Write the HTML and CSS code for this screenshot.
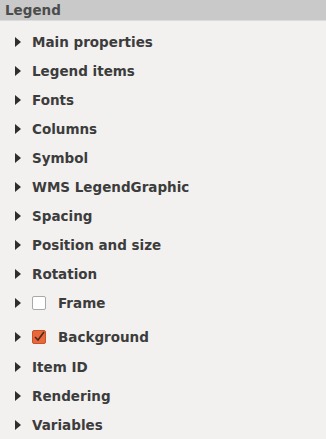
FILE: index.html
```html
<!DOCTYPE html>
<html lang="en">
<head>
    <meta charset="UTF-8">
    <title>Legend</title>
    <link rel="stylesheet" href="styles.css">
</head>
<body>
    <div class="panel">
        <div class="header">Legend</div>
        <div class="groups">
            <div class="group"><span class="arrow"></span><span class="title">Main properties</span></div>
            <div class="group"><span class="arrow"></span><span class="title">Legend items</span></div>
            <div class="group"><span class="arrow"></span><span class="title">Fonts</span></div>
            <div class="group"><span class="arrow"></span><span class="title">Columns</span></div>
            <div class="group"><span class="arrow"></span><span class="title">Symbol</span></div>
            <div class="group"><span class="arrow"></span><span class="title">WMS LegendGraphic</span></div>
            <div class="group"><span class="arrow"></span><span class="title">Spacing</span></div>
            <div class="group"><span class="arrow"></span><span class="title">Position and size</span></div>
            <div class="group"><span class="arrow"></span><span class="title">Rotation</span></div>
            <div class="group"><span class="arrow"></span><span class="box"></span><span class="title">Frame</span></div>
            <div class="group check-group"><span class="arrow"></span><span class="box checked">
                <svg width="14" height="14" viewBox="0 0 14 14"><path d="M3 7 L6 10 L12 2" fill="none" stroke="#4a2a1c" stroke-width="1.6"/></svg>
            </span><span class="title">Background</span></div>
            <div class="group"><span class="arrow"></span><span class="title">Item ID</span></div>
            <div class="group"><span class="arrow"></span><span class="title">Rendering</span></div>
            <div class="group"><span class="arrow"></span><span class="title">Variables</span></div>
        </div>
    </div>
</body>
</html>
```
FILE: styles.css
```css
body {
    margin: 0;
    background-color: #f2f1f0;
    font-family: "DejaVu Sans", sans-serif;
    color: #3c3c3c;
}
.panel {
    width: 326px;
    height: 439px;
    overflow: hidden;
}
.header {
    height: 20px;
    line-height: 20px;
    padding-left: 5px;
    background-color: #c9c9c9;
    border-bottom: 1px solid #dcdcdc;
    font-size: 13.5px;
    font-weight: bold;
    color: #4c4c4c;
}
.groups {
    padding-top: 6px;
}
.group {
    height: 29px;
    display: flex;
    align-items: center;
    padding-left: 15px;
    font-size: 13.5px;
    font-weight: bold;
}
.check-group {
    height: 30px;
    margin-top: 5px;
}
.arrow {
    width: 0;
    height: 0;
    border-top: 5px solid transparent;
    border-bottom: 5px solid transparent;
    border-left: 6px solid #2e2e2e;
    margin-right: 11px;
}
.box {
    width: 12px;
    height: 12px;
    border: 1px solid #a8a8a8;
    border-radius: 2px;
    background-color: #ffffff;
    margin-right: 12px;
    display: flex;
}
.box.checked {
    background-color: #e8683b;
    border-color: #c8522a;
}
.box svg {
    margin: -1px;
}
```
